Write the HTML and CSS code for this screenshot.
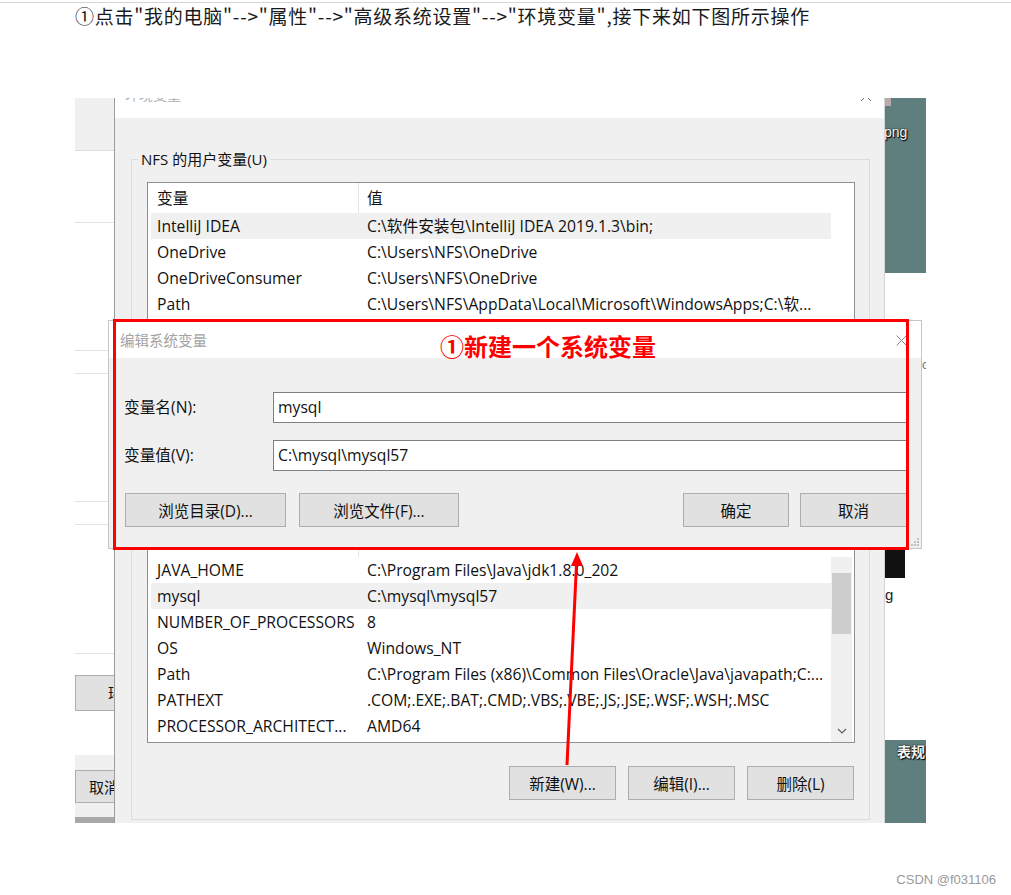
FILE: index.html
```html
<!DOCTYPE html>
<html lang="zh-CN">
<head>
<meta charset="utf-8">
<title>环境变量</title>
<link rel="stylesheet" href="styles.css">
</head>
<body>
<div class="topline"></div>
<p class="intro">①点击"我的电脑"--&gt;"属性"--&gt;"高级系统设置"--&gt;"环境变量",接下来如下图所示操作</p>

<div class="shot">
  <div class="bgwin">
    <div class="bg-bar"></div>
    <div class="bg-row r72"></div>
    <div class="bg-row r128"></div>
    <div class="bg-row r23"></div>
    <div class="bg-row r128"></div>
    <div class="bg-row r23"></div>
    <div class="bg-row r129"></div>
    <div class="bg-gap g21"></div>
    <div class="bg-btn bg-btn-a">环境变量</div>
    <div class="bg-gap g44"></div>
    <div class="bg-foot"><div class="bg-btn bg-btn-b">取消</div></div>
    <div class="bg-edge"></div>
  </div>

  <div class="desk">
    <div class="desk-top">
      <div class="icon-stub"></div>
      <div class="desk-label">png</div>
    </div>
    <div class="desk-mid">
      <div class="desk-c">c</div>
      <div class="blackbox"></div>
      <div class="desk-g">g</div>
    </div>
    <div class="desk-bot">
      <div class="desk-label desk-label-cn">表规</div>
    </div>
  </div>

  <div class="envwin">
    <div class="env-title">
      <span class="env-title-text">环境变量</span>
      <svg class="env-close" width="12" height="12" viewBox="0 0 12 12"><path d="M1 1L11 11M11 1L1 11" stroke="#6d6d6d" stroke-width="1" fill="none"/></svg>
    </div>
    <div class="env-body">
      <div class="group">
        <div class="group-title">NFS 的用户变量(U)</div>
        <div class="list list-user">
          <div class="list-head"><span class="hcol1">变量</span><span class="hcol2">值</span></div>
          <div class="list-body">
            <div class="rows">
              <div class="row sel"><span class="col1">IntelliJ IDEA</span><span class="col2">C:\软件安装包\IntelliJ IDEA 2019.1.3\bin;</span></div>
              <div class="row"><span class="col1">OneDrive</span><span class="col2">C:\Users\NFS\OneDrive</span></div>
              <div class="row"><span class="col1">OneDriveConsumer</span><span class="col2">C:\Users\NFS\OneDrive</span></div>
              <div class="row"><span class="col1">Path</span><span class="col2">C:\Users\NFS\AppData\Local\Microsoft\WindowsApps;C:\软...</span></div>
              <div class="row"><span class="col1">TEMP</span><span class="col2">C:\Users\NFS\AppData\Local\Temp</span></div>
              <div class="row"><span class="col1">TMP</span><span class="col2">C:\Users\NFS\AppData\Local\Temp</span></div>
            </div>
            <div class="vscroll empty"></div>
          </div>
        </div>
      </div>

      <div class="group group-sys">
        <div class="group-title">系统变量(S)</div>
        <div class="list list-sys">
          <div class="list-head"><span class="hcol1">变量</span><span class="hcol2">值</span></div>
          <div class="list-body">
            <div class="rows">
              <div class="row"><span class="col1">JAVA_HOME</span><span class="col2">C:\Program Files\Java\jdk1.8.0_202</span></div>
              <div class="row sel"><span class="col1">mysql</span><span class="col2">C:\mysql\mysql57</span></div>
              <div class="row"><span class="col1">NUMBER_OF_PROCESSORS</span><span class="col2">8</span></div>
              <div class="row"><span class="col1">OS</span><span class="col2">Windows_NT</span></div>
              <div class="row"><span class="col1">Path</span><span class="col2">C:\Program Files (x86)\Common Files\Oracle\Java\javapath;C:...</span></div>
              <div class="row"><span class="col1">PATHEXT</span><span class="col2">.COM;.EXE;.BAT;.CMD;.VBS;.VBE;.JS;.JSE;.WSF;.WSH;.MSC</span></div>
              <div class="row"><span class="col1">PROCESSOR_ARCHITECT...</span><span class="col2">AMD64</span></div>
            </div>
            <div class="vscroll">
              <div class="thumb"></div>
              <svg class="sb-down" width="10" height="6" viewBox="0 0 10 6"><path d="M1 1L5 5L9 1" stroke="#606060" stroke-width="1.2" fill="none"/></svg>
            </div>
          </div>
        </div>
        <div class="env-actions">
          <button class="winbtn env-btn">新建(W)...</button>
          <button class="winbtn env-btn">编辑(I)...</button>
          <button class="winbtn env-btn">删除(L)</button>
        </div>
      </div>
    </div>
  </div>

  <div class="editwin">
    <div class="edit-title">
      <span class="edit-title-text">编辑系统变量</span>
      <svg class="edit-close" width="11" height="11" viewBox="0 0 11 11"><path d="M0.5 0.5L10.5 10.5M10.5 0.5L0.5 10.5" stroke="#8a8a8a" stroke-width="1" fill="none"/></svg>
    </div>
    <div class="edit-body">
      <div class="field">
        <span class="field-label">变量名(N):</span>
        <div class="field-input">mysql</div>
      </div>
      <div class="field">
        <span class="field-label">变量值(V):</span>
        <div class="field-input">C:\mysql\mysql57</div>
      </div>
      <div class="edit-actions">
        <button class="winbtn btn-dir">浏览目录(D)...</button>
        <button class="winbtn btn-file">浏览文件(F)...</button>
        <span class="spacer"></span>
        <button class="winbtn btn-ok">确定</button>
        <button class="winbtn btn-cancel">取消</button>
      </div>
    </div>
    <div class="redbox"></div>
    <div class="annot">①新建一个系统变量</div>
    <svg class="grip" width="9" height="9" viewBox="0 0 9 9">
      <rect x="6" y="0" width="2" height="2" fill="#c2c2c2"/>
      <rect x="3" y="3" width="2" height="2" fill="#c2c2c2"/>
      <rect x="6" y="3" width="2" height="2" fill="#c2c2c2"/>
      <rect x="0" y="6" width="2" height="2" fill="#c2c2c2"/>
      <rect x="3" y="6" width="2" height="2" fill="#c2c2c2"/>
      <rect x="6" y="6" width="2" height="2" fill="#c2c2c2"/>
    </svg>
  </div>

  <svg class="arrow" width="26" height="222" viewBox="0 0 26 222">
    <path d="M7 217L16.6 14" stroke="#ff0000" stroke-width="3" fill="none"/>
    <polygon points="17,4 11,18 23,18" fill="#ff0000"/>
  </svg>
</div>

<div class="watermark">CSDN @f031106</div>
</body>
</html>
```

FILE: styles.css
```css
* { box-sizing: border-box; }

body {
  margin: 0;
  background: #fff;
  font-family: "Noto Sans CJK SC", sans-serif;
}

.topline {
  height: 1px;
  margin-top: 2px;
  background: #d6d6d6;
}

.intro {
  margin: 0;
  padding-left: 75px;
  font-family: "Noto Sans CJK SC", sans-serif;
  font-size: 19px;
  letter-spacing: 0.75px;
  line-height: 26px;
  color: #1a1a1a;
  white-space: nowrap;
}

.watermark {
  margin-top: 49px;
  padding-right: 15px;
  text-align: right;
  font-family: "Liberation Sans", sans-serif;
  font-size: 13px;
  line-height: 16px;
  color: #9a9a9a;
}

/* ---------- screenshot canvas ---------- */
.shot {
  position: relative;
  margin: 69px 0 0 75px;
  width: 851px;
  height: 725px;
  overflow: hidden;
  background: #fff;
  font-family: "Open Sans", "Noto Sans CJK SC", sans-serif;
  font-size: 15.7px;
  color: #111;
}

/* background window strip on the left */
.bgwin {
  position: absolute;
  left: 0;
  top: 0;
  width: 40px;
  height: 725px;
  display: flex;
  flex-direction: column;
  background: #fff;
  overflow: hidden;
}
.bg-bar { flex: none; height: 53px; background: #f0f0f0; border-bottom: 1px solid #dcdcdc; }
.bg-row { flex: none; border-bottom: 1px solid #e2e2e2; }
.r72 { height: 72px; }
.r128 { height: 128px; }
.r23 { height: 23px; }
.r129 { height: 129px; }
.bg-gap { flex: none; }
.g21 { height: 21px; }
.g44 { height: 44px; }
.bg-btn {
  flex: none;
  width: 80px;
  background: #e1e1e1;
  border: 1px solid #adadad;
  font-family: "Noto Sans CJK SC", sans-serif;
  font-size: 15px;
  white-space: nowrap;
  color: #111;
}
.bg-btn-a { height: 36px; line-height: 34px; padding-left: 32px; }
.bg-foot { flex: none; height: 62px; background: #f0f0f0; padding-top: 15px; }
.bg-btn-b { height: 33px; line-height: 31px; padding-left: 13px; }
.bg-edge { flex: none; height: 6px; background: #a8a8a8; }

/* desktop strip on the right */
.desk {
  position: absolute;
  left: 810px;
  top: 0;
  width: 41px;
  height: 725px;
  display: flex;
  flex-direction: column;
  overflow: hidden;
}
.desk-top { flex: none; height: 175px; background: #5f7e7e; }
.desk-mid { flex: none; height: 467px; background: #fff; }
.desk-bot { flex: none; height: 83px; background: #5f7e7e; }
.icon-stub { width: 6px; height: 8px; background: #b9a9ad; }
.desk-label {
  margin-top: 19px;
  margin-left: -1px;
  font-family: "Liberation Sans", sans-serif;
  font-size: 14px;
  line-height: 14px;
  color: #f4f4f4;
  text-shadow: 1px 1px 1px #000, 0 0 2px #000;
  white-space: nowrap;
}
.desk-label-cn {
  margin-top: 3px;
  margin-left: 12px;
  font-family: "Noto Sans CJK SC", sans-serif;
  font-weight: 700;
  line-height: 16px;
}
.desk-c {
  margin-top: 84px;
  padding-left: 37px;
  font-family: "Liberation Sans", sans-serif;
  font-size: 13px;
  line-height: 16px;
  color: #777;
}
.blackbox { margin-top: 176px; width: 20px; height: 29px; background: #111; }
.desk-g {
  margin-top: 9px;
  font-family: "Liberation Sans", sans-serif;
  font-size: 15px;
  line-height: 16px;
  color: #222;
}

/* ---------- Environment variables window ---------- */
.envwin {
  position: absolute;
  left: 39px;
  top: 0;
  width: 771px;
  height: 725px;
  display: flex;
  flex-direction: column;
  background: #f0f0f0;
  border-left: 1px solid #9c9c9c;
  border-right: 1px solid #d4d4d4;
  overflow: hidden;
}
.env-title {
  flex: none;
  height: 20px;
  display: flex;
  background: #fff;
  overflow: hidden;
}
.env-title-text {
  margin-left: 10px;
  margin-top: -14px;
  font-family: "Noto Sans CJK SC", sans-serif;
  font-size: 14px;
  line-height: 20px;
  color: #b0b0b0;
}
.env-close { margin-left: auto; margin-right: 12px; margin-top: -8px; }
.env-body { flex: 1; padding: 41px 14px 0 16px; }

.group {
  border: 1px solid #dcdcdc;
  padding: 0 14px 10px 15px;
}
.group-sys { margin-top: 25px; padding-bottom: 19px; }
.group-title {
  width: max-content;
  margin-top: -9px;
  margin-left: -9px;
  padding: 0 3px;
  background: #f0f0f0;
  font-family: "Open Sans", "Noto Sans CJK SC", sans-serif;
  font-size: 15px;
  line-height: 16px;
}

.list {
  margin-top: 15px;
  border: 1px solid #8c8f95;
  background: #fff;
}
.list-user { height: 250px; overflow: hidden; }
.list-sys { margin-top: 50px; height: 217px; }
.list-head { display: flex; height: 30px; line-height: 30px; background: #fff; }
.hcol1 { width: 211px; padding-left: 9px; border-right: 1px solid #e5e5e5; }
.hcol2 { padding-left: 8px; }
.list-body { display: flex; }
.list-sys .list-body { height: 185px; }
.rows { flex: 1; padding: 0 0 3px 3px; }
.row {
  display: flex;
  height: 26px;
  line-height: 26px;
  white-space: nowrap;
  overflow: hidden;
}
.row.sel { background: #f0f0f0; }
.col1 { flex: none; width: 210px; padding-left: 6px; }
.col2 { padding-left: 6px; }

.vscroll {
  flex: none;
  width: 21px;
  margin-right: 2px;
  display: flex;
  flex-direction: column;
  align-items: center;
  background: #f0f0f0;
}
.vscroll.empty { background: #fff; }
.thumb { margin-top: 16px; width: 19px; height: 61px; background: #cdcdcd; }
.sb-down { margin-top: auto; margin-bottom: 8px; }

.env-actions {
  display: flex;
  justify-content: flex-end;
  gap: 12px;
  margin-top: 23px;
  padding-right: 1px;
}

.winbtn {
  height: 34px;
  padding: 0;
  background: #e1e1e1;
  border: 1px solid #adadad;
  font-family: "Open Sans", "Noto Sans CJK SC", sans-serif;
  font-size: 15.5px;
  color: #111;
}
.env-btn { width: 107px; }

/* ---------- Edit system variable dialog ---------- */
.editwin {
  position: absolute;
  left: 33px;
  top: 222px;
  width: 814px;
  height: 229px;
  background: #f0f0f0;
  border: 1px solid #c6c6c6;
}
.edit-title {
  height: 37px;
  display: flex;
  align-items: center;
  background: #fff;
}
.edit-title-text {
  margin-left: 11px;
  font-family: "Noto Sans CJK SC", sans-serif;
  font-size: 14.5px;
  color: #a3a3a3;
}
.edit-close { margin-left: auto; margin-right: 14px; margin-top: 1px; }
.edit-body { padding: 34px 14px 0 15px; }
.field { display: flex; height: 31px; }
.field + .field { margin-top: 17px; }
.field-label { flex: none; width: 149px; line-height: 31px; }
.field-input {
  flex: 1;
  background: #fff;
  border: 1px solid #7f7f7f;
  padding-left: 4px;
  line-height: 29px;
}
.edit-actions { display: flex; margin-top: 22px; }
.spacer { flex: 1; }
.btn-dir { width: 161px; margin-left: 1px; }
.btn-file { width: 160px; margin-left: 13px; }
.btn-ok { width: 106px; }
.btn-cancel { width: 107px; margin-left: 11px; }

.redbox {
  position: absolute;
  left: 4px;
  top: -2px;
  width: 796px;
  height: 231px;
  border: 3px solid #ff0000;
}
.annot {
  position: absolute;
  left: 331px;
  top: 10px;
  font-family: "Noto Sans CJK SC", sans-serif;
  font-size: 24px;
  font-weight: 700;
  line-height: 30px;
  color: #ff0000;
  white-space: nowrap;
}
.grip { position: absolute; right: 1px; bottom: 1px; }

.arrow { position: absolute; left: 485px; top: 450px; }
```
